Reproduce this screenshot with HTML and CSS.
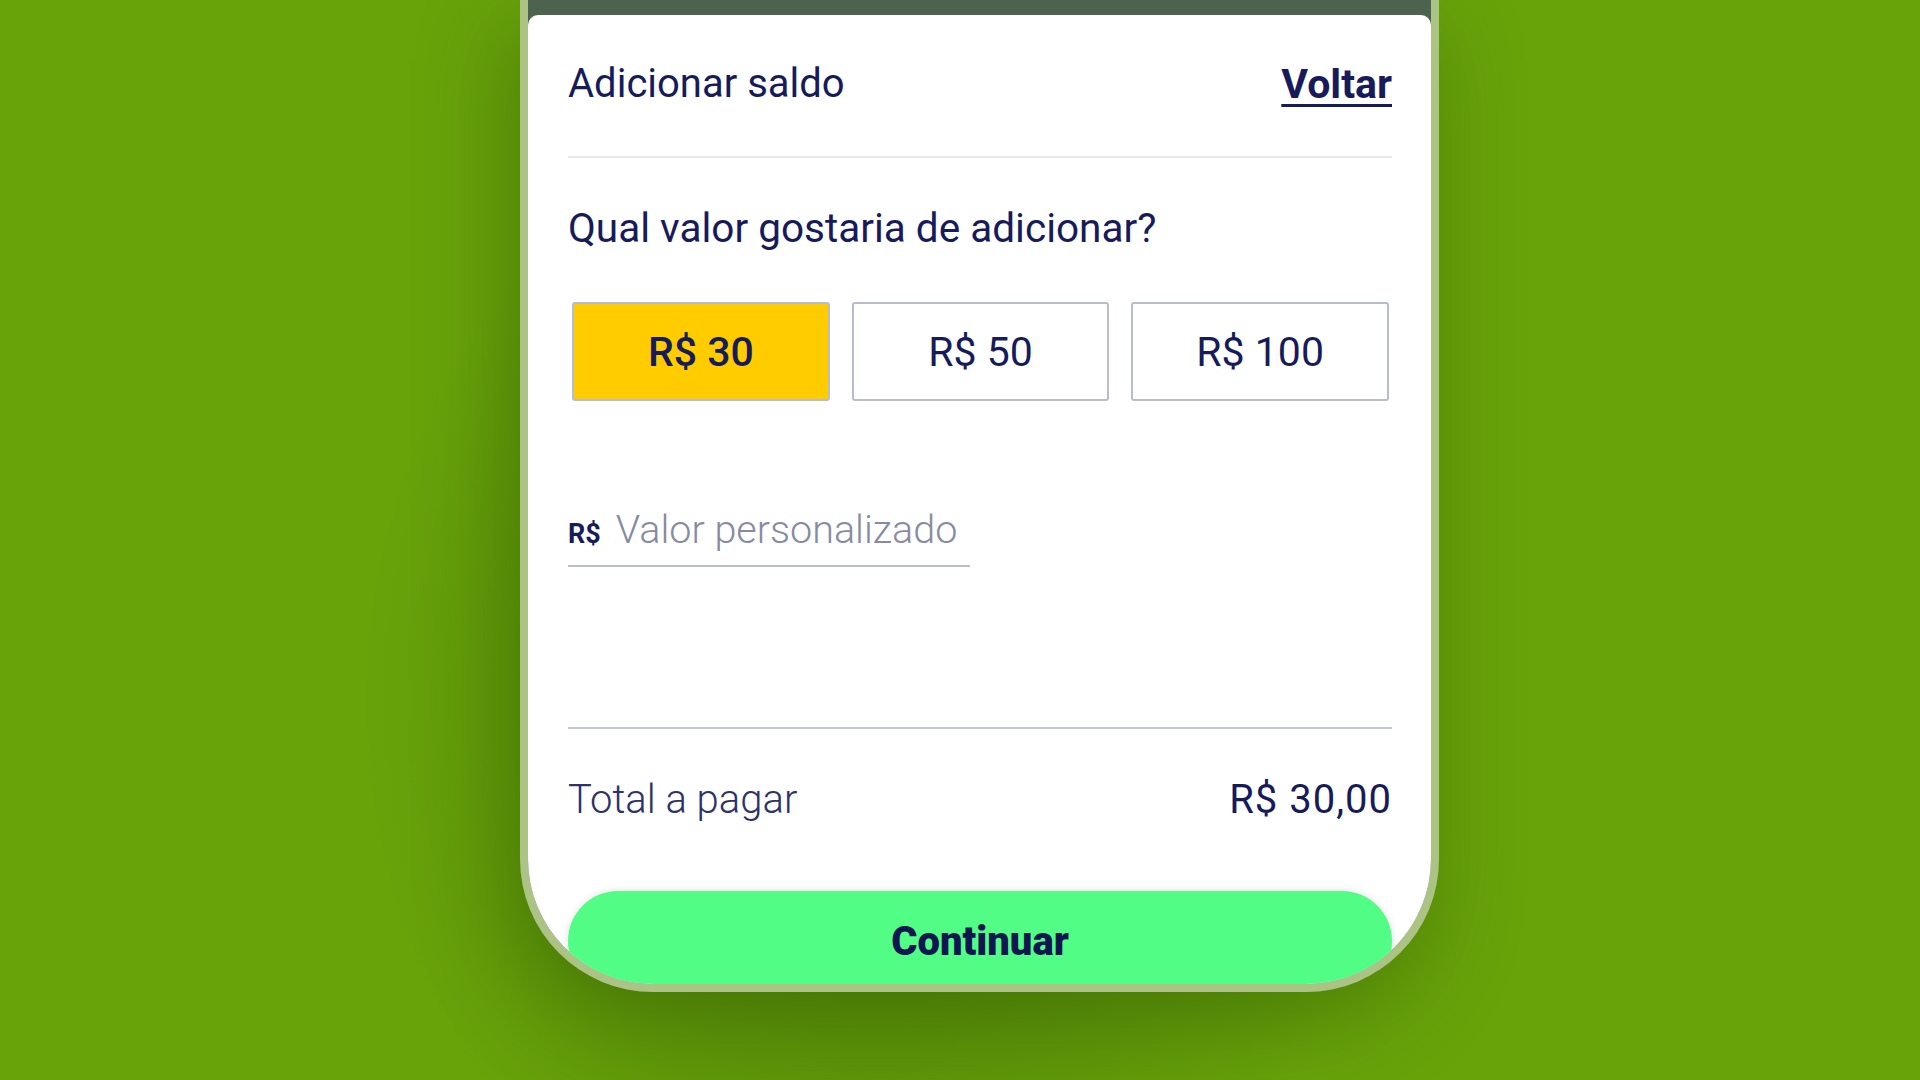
FILE: index.html
```html
<!DOCTYPE html>
<html lang="pt-BR">
<head>
<meta charset="utf-8">
<title>Adicionar saldo</title>
<link rel="stylesheet" href="styles.css">
</head>
<body>
<div class="stage">
  <div class="phone">
    <div class="sheet">
      <header class="header">
        <h1 class="title">Adicionar saldo</h1>
        <a class="back" href="#">Voltar</a>
      </header>
      <h2 class="question">Qual valor gostaria de adicionar?</h2>
      <div class="options">
        <button class="option selected">R$ 30</button>
        <button class="option">R$ 50</button>
        <button class="option">R$ 100</button>
      </div>
      <label class="custom">
        <span class="prefix">R$</span>
        <input class="custom-input" type="text" placeholder="Valor personalizado">
      </label>
      <div class="total">
        <span class="total-label">Total a pagar</span>
        <span class="total-value">R$ 30,00</span>
      </div>
      <button class="continue">Continuar</button>
    </div>
  </div>
</div>
</body>
</html>
```
FILE: styles.css
```css
* { box-sizing: border-box; }
html, body {
  margin: 0;
  height: 1080px;
  overflow: hidden;
}
body {
  background: #68a30a;
  font-family: Roboto, "Liberation Sans", sans-serif;
  color: #1b1e5b;
}
.stage {
  display: flex;
  justify-content: center;
  padding-left: 39px;
  height: 1080px;
  background: radial-gradient(ellipse 520px 600px at 880px 700px, rgba(40, 80, 0, 0.4), rgba(40, 80, 0, 0) 100%);
}
.phone {
  width: 919px;
  height: 992px;
  flex-shrink: 0;
  border: 8px solid #abc486;
  border-top: none;
  border-radius: 0 0 133px 133px;
  background: #4e634f;
  overflow: hidden;
  padding-top: 15px;
  box-shadow: -10px 30px 90px rgba(30, 60, 0, 0.35);
}
.sheet {
  height: 100%;
  background: #ffffff;
  border-radius: 10px 10px 0 0;
  padding: 0 39px 0 40px;
  display: flex;
  flex-direction: column;
}
.sheet > * {
  flex-shrink: 0;
}
.header {
  height: 143px;
  display: flex;
  justify-content: space-between;
  align-items: center;
  padding-bottom: 4px;
  border-bottom: 2px solid #e6e7eb;
}
.title {
  margin: 0;
  font-size: 40px;
  font-weight: 400;
  color: #181b5a;
}
.back {
  font-size: 41px;
  font-weight: 700;
  color: #181b5a;
  text-decoration: underline;
  text-decoration-thickness: 3px;
  text-underline-offset: 6px;
}
.question {
  margin: 46px 0 0;
  font-size: 40.5px;
  font-weight: 400;
  color: #181b5a;
}
.options {
  margin-top: 50px;
  padding: 0 3px 0 4px;
  display: grid;
  grid-template-columns: repeat(3, 1fr);
  gap: 22px;
}
.option {
  height: 99px;
  border: 2px solid #b9bdcb;
  border-radius: 3px;
  background: #ffffff;
  font-family: Roboto, "Liberation Sans", sans-serif;
  font-size: 41px;
  font-weight: 400;
  color: #181b5a;
  padding: 0;
}
.option.selected {
  background: #ffcc00;
  font-weight: 500;
}
.custom {
  margin-top: 105px;
  width: 402px;
  display: flex;
  align-items: baseline;
  gap: 15px;
  padding-bottom: 12px;
  border-bottom: 2px solid #b9bdcb;
}
.prefix {
  font-size: 27px;
  font-weight: 700;
  color: #181b5a;
}
.custom-input {
  flex: 1;
  min-width: 0;
  border: none;
  outline: none;
  padding: 0;
  background: transparent;
  font-family: Roboto, "Liberation Sans", sans-serif;
  font-size: 39.5px;
  font-weight: 300;
  color: #181b5a;
}
.custom-input::placeholder {
  color: #868ba2;
  opacity: 1;
}
.total {
  margin-top: 160px;
  border-top: 2px solid #c3c7d3;
  padding-top: 47px;
  display: flex;
  justify-content: space-between;
  align-items: center;
  font-size: 40px;
}
.total-label {
  font-weight: 300;
  color: #2e3266;
}
.total-value {
  font-weight: 400;
  color: #181b5a;
  letter-spacing: 1px;
}
.continue {
  margin-top: 68px;
  height: 100px;
  width: 100%;
  border: none;
  border-radius: 50px;
  background: #52fd86;
  box-shadow: 0 0 8px rgba(0, 0, 0, 0.12);
  font-family: Roboto, "Liberation Sans", sans-serif;
  font-size: 40px;
  font-weight: 900;
  color: #101650;
  padding: 0;
}
```
